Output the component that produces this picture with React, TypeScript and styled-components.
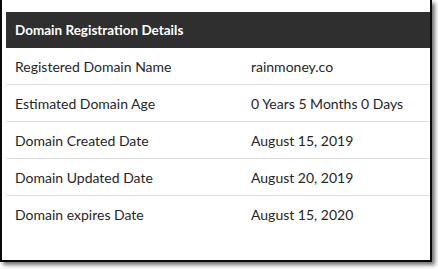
import React from "react";
import styled, { createGlobalStyle } from "styled-components";

const Global = createGlobalStyle`
  html, body { margin: 0; padding: 0; background: #ffffff; }
  body { font-family: Lato, "Open Sans", "Liberation Sans", sans-serif; }
`;

const Page = styled.div`
  width: 438px;
  height: 269px;
  overflow: hidden;
  background: #ffffff;
`;

const Frame = styled.div`
  box-sizing: border-box;
  width: 432px;
  height: 262px;
  border-left: 2px solid #0a0a0a;
  border-right: 2px solid #0a0a0a;
  border-bottom: 2px solid #0a0a0a;
  box-shadow: 3px 3px 4px rgba(0, 0, 0, 0.55);
  background: #ffffff;
  padding: 12px 0 0 4px;
`;

const Table = styled.div`
  display: flex;
  flex-direction: column;
`;

const Header = styled.div`
  height: 36px;
  display: flex;
  align-items: center;
  padding: 0 9px;
  background: #2f2f2f;
  color: #ffffff;
  font-weight: 700;
  font-size: 13.5px;
`;

const Row = styled.div<{ $last?: boolean }>`
  display: grid;
  grid-template-columns: 236px 1fr;
  align-items: center;
  height: 37px;
  box-sizing: border-box;
  border-bottom: ${(p) => (p.$last ? "none" : "1px solid #dedede")};
  color: #262626;
  font-size: 14px;
`;

const Cell = styled.div`
  padding: 0 9px;
  white-space: nowrap;
`;

const rows: [string, string][] = [
  ["Registered Domain Name", "rainmoney.co"],
  ["Estimated Domain Age", "0 Years 5 Months 0 Days"],
  ["Domain Created Date", "August 15, 2019"],
  ["Domain Updated Date", "August 20, 2019"],
  ["Domain expires Date", "August 15, 2020"],
];

export default function App() {
  return (
    <Page>
      <Global />
      <Frame>
        <Table>
          <Header>Domain Registration Details</Header>
          {rows.map(([k, v], i) => (
            <Row key={k} $last={i === rows.length - 1}>
              <Cell>{k}</Cell>
              <Cell>{v}</Cell>
            </Row>
          ))}
        </Table>
      </Frame>
    </Page>
  );
}
